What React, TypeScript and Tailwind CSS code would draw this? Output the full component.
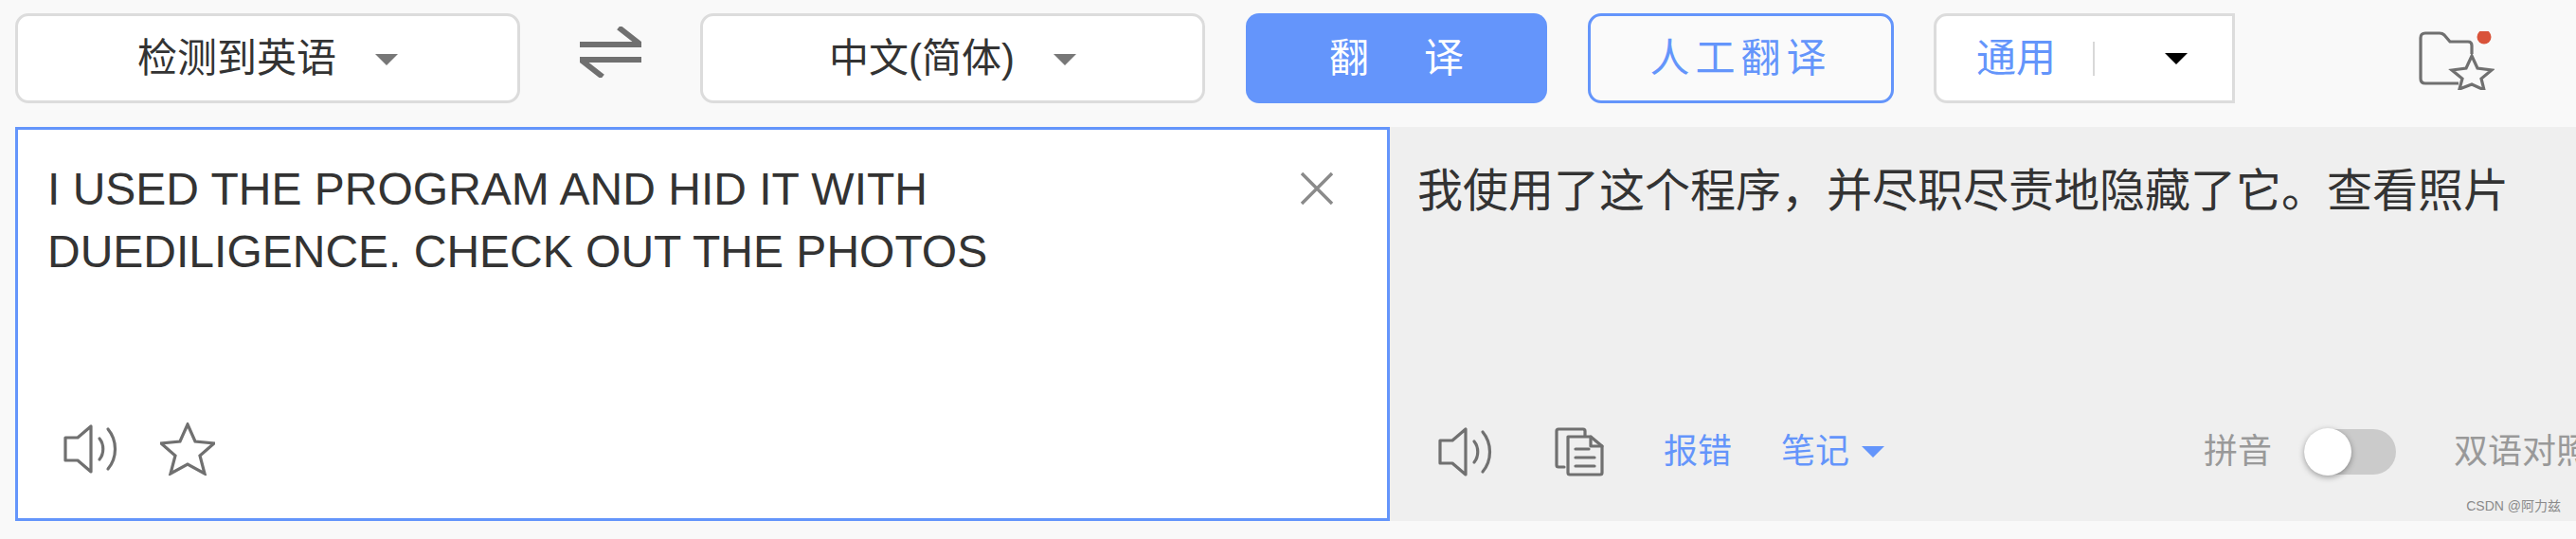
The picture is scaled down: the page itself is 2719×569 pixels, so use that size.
import type { ReactNode } from 'react';

const FONT = "font-['Liberation_Sans','Noto_Sans_CJK_SC',sans-serif]";

function Caret({ className }: { className: string }) {
  return (
    <svg viewBox="0 0 24 12" className={`shrink-0 ${className}`} aria-hidden="true">
      <path d="M0 0H24L12 12Z" fill="currentColor" />
    </svg>
  );
}

function LanguageSelect({ label, textWidth }: { label: string; textWidth: string }) {
  return (
    <button
      type="button"
      className="flex h-[95px] w-[533px] items-center justify-center rounded-[14px] border-[3px] border-[#dcdcdc] bg-white text-[42px] text-[#333]"
    >
      <span className={textWidth}>{label}</span>
      <Caret className="ml-[41px] mt-[2px] h-[12px] w-[24px] text-[#777]" />
    </button>
  );
}

function SwapIcon() {
  return (
    <svg viewBox="0 0 65 54" className="h-[54px] w-[65px]" aria-hidden="true">
      <path d="M0 19H64L41 1" fill="none" stroke="#707070" strokeWidth="6" />
      <path d="M65 35H1L24 53" fill="none" stroke="#707070" strokeWidth="6" />
    </svg>
  );
}

function SpeakerIcon() {
  return (
    <svg viewBox="0 0 58 52" className="h-[52px] w-[58px] shrink-0" fill="none" stroke="#707070" strokeWidth="3.2" strokeLinejoin="round" strokeLinecap="round" aria-hidden="true">
      <path d="M2 14H15L29 2V50L15 38H2Z" />
      <path d="M38 15C43 21 43 31 38 37" />
      <path d="M47 5C57 17 57 35 47 47" />
    </svg>
  );
}

function StarIcon() {
  return (
    <svg viewBox="0 0 58 56" className="h-[56px] w-[58px] shrink-0" fill="none" stroke="#707070" strokeWidth="3.2" strokeLinejoin="miter" aria-hidden="true">
      <path d="M29 2L37 20L57 22L42 35L47 54L29 44L11 54L16 35L1 22L21 20Z" />
    </svg>
  );
}

function CopyIcon() {
  return (
    <svg viewBox="0 0 52 52" className="h-[52px] w-[52px] shrink-0" fill="none" stroke="#707070" strokeWidth="3.2" strokeLinejoin="round" strokeLinecap="round" aria-hidden="true">
      <path d="M10 42H4Q2 42 2 40V4Q2 2 4 2H30Q32 2 32 4V9" />
      <path d="M14 10H38L50 20V48Q50 50 48 50H16Q14 50 14 48Z" />
      <path d="M38 10V20H50" />
      <path d="M22 23H36M22 32H42M22 41H42" />
    </svg>
  );
}

function FolderStarIcon() {
  return (
    <svg viewBox="0 0 80 62" className="h-[62px] w-[80px]" fill="none" stroke="#707070" strokeWidth="3.2" aria-hidden="true">
      <path d="M42 55H7Q2 55 2 50V7Q2 2 7 2H22Q25 2 27 4L33 11H52Q56 11 56 15V24" strokeLinejoin="round" />
      <path d="M56 26L62 39L77 41L66 50L69 62L56 56L43 61L46 50L35 41L50 39Z" />
      <circle cx="69" cy="6" r="7.5" fill="#d9533a" stroke="none" />
    </svg>
  );
}

function CloseIcon() {
  return (
    <svg viewBox="0 0 36 36" className="h-[36px] w-[36px]" stroke="#8a8a8a" strokeWidth="3.4" aria-hidden="true">
      <path d="M2 2L34 34M34 2L2 34" />
    </svg>
  );
}

function Action({ children }: { children: ReactNode }) {
  return <span className="text-[36px] leading-[52px] text-[#6495fb]">{children}</span>;
}

export default function App() {
  return (
    <div className={`${FONT} flex h-[569px] w-[2719px] flex-col overflow-hidden bg-[#f9f9f9]`}>
      <header className="flex items-start pl-[16px] pt-[14px]">
        <LanguageSelect label="检测到英语" textWidth="w-[210px]" />
        <div className="ml-[63px] mr-[62px] mt-[14px]">
          <SwapIcon />
        </div>
        <LanguageSelect label="中文(简体)" textWidth="w-[196px]" />
        <button
          type="button"
          className="ml-[43px] flex h-[95px] w-[318px] items-center justify-center gap-[58px] rounded-[14px] bg-[#6495fb] text-[42px] text-white"
        >
          <span>翻</span>
          <span>译</span>
        </button>
        <button
          type="button"
          className="ml-[43px] h-[95px] w-[323px] rounded-[14px] border-[3px] border-[#6495fb] bg-[#fafafa] text-[42px] tracking-[6px] text-[#6495fb]"
        >
          人工翻译
        </button>
        <div className="ml-[42px] flex h-[95px] w-[318px] items-center rounded-l-[14px] border-[3px] border-[#dcdcdc] bg-white pl-[42px]">
          <span className="text-[42px] text-[#6495fb]">通用</span>
          <span className="ml-[39px] h-[36px] w-[2px] bg-[#d8d8d8]" />
          <Caret className="ml-[74px] h-[12px] w-[24px] text-black" />
        </div>
        <div className="ml-[194px] mt-[19px]">
          <FolderStarIcon />
        </div>
      </header>

      <main className="mt-[25px] flex h-[416px]">
        <section className="ml-[16px] flex w-[1451px] flex-col border-[3px] border-[#6495fb] bg-white pb-[45px] pl-[31px] pr-[56px] pt-[30px]">
          <div className="flex items-start justify-between">
            <p className="w-[1100px] text-[48px] leading-[66px] text-[#333]">
              I USED THE PROGRAM AND HID IT WITH DUEDILIGENCE. CHECK OUT THE PHOTOS
            </p>
            <div className="mt-[14px]">
              <CloseIcon />
            </div>
          </div>
          <div className="mt-auto flex items-center gap-[44px] pl-[17px]">
            <SpeakerIcon />
            <StarIcon />
          </div>
        </section>

        <section className="flex min-w-0 flex-1 flex-col overflow-hidden bg-[#efefef] pb-[46px] pl-[29px] pt-[35px]">
          <p className="whitespace-nowrap text-[48px] leading-[66px] text-[#333]">我使用了这个程序，并尽职尽责地隐藏了它。查看照片</p>
          <div className="mt-auto flex items-center whitespace-nowrap pl-[22px]">
            <SpeakerIcon />
            <div className="ml-[65px]">
              <CopyIcon />
            </div>
            <div className="ml-[63px]">
              <Action>报错</Action>
            </div>
            <div className="ml-[52px] flex items-center gap-[13px]">
              <Action>笔记</Action>
              <Caret className="h-[12px] w-[24px] text-[#6495fb]" />
            </div>
            <span className="ml-[337px] text-[36px] text-[#999]">拼音</span>
            <div className="relative ml-[34px] h-[48px] w-[97px] shrink-0 rounded-full bg-[#cbcbcb]">
              <span className="absolute left-0 top-[-1px] h-[50px] w-[50px] rounded-full bg-white shadow-[0_2px_6px_rgba(0,0,0,0.35)]" />
            </div>
            <span className="ml-[61px] text-[36px] text-[#999]">双语对照</span>
          </div>
        </section>
      </main>

      <footer className="-mt-[23px] flex justify-end pr-[16px]">
        <span className="text-[14px] leading-[15px] text-[#8a8a8a]">CSDN @阿力兹</span>
      </footer>
    </div>
  );
}
